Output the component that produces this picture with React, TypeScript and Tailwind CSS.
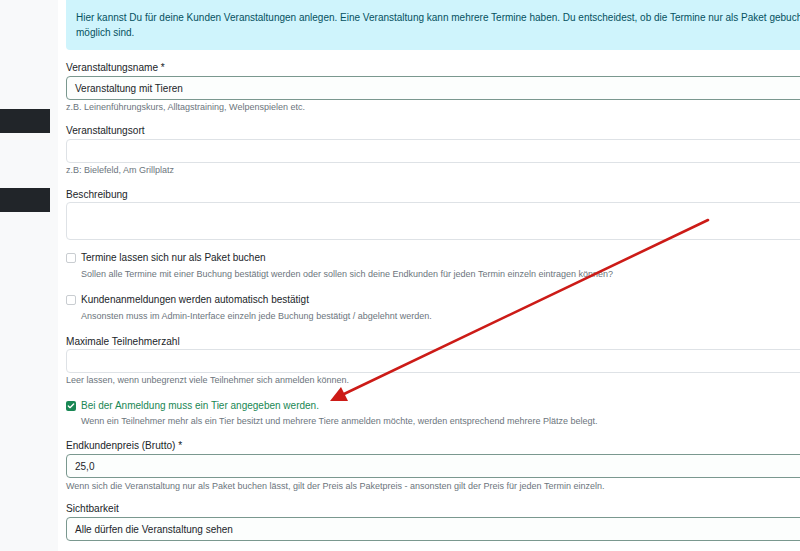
import { Check } from 'lucide-react'

const font = { fontFamily: '"Liberation Sans", Arial, sans-serif' }

function Label({ children }: { children: React.ReactNode }) {
  return <div className="text-[10.1px] leading-[15px] text-[#212529]">{children}</div>
}

function Help({ children, indent = false }: { children: React.ReactNode; indent?: boolean }) {
  return (
    <div className={`text-[9px] leading-[13px] text-[#6c757d] ${indent ? 'pl-[15px]' : ''}`}>
      {children}
    </div>
  )
}

function Input({ value, filled = false }: { value?: string; filled?: boolean }) {
  return (
    <div
      className={`h-[24px] rounded-[4px] border px-[8px] flex items-center text-[10px] text-[#212529] ${
        filled ? 'border-[#7a988f] bg-[#fcfefd]' : 'border-[#dee2e6] bg-white'
      }`}
    >
      {value}
    </div>
  )
}

function CheckRow({ label, checked = false }: { label: string; checked?: boolean }) {
  return (
    <div className="flex items-center gap-[5px] h-[15px]">
      {checked ? (
        <span className="w-[10px] h-[10px] rounded-[2px] bg-[#198754] flex items-center justify-center">
          <Check size={8} strokeWidth={4} className="text-white" />
        </span>
      ) : (
        <span className="w-[10px] h-[10px] rounded-[2px] border border-[#c9cdd1] bg-white" />
      )}
      <span className={`text-[10px] leading-[15px] ${checked ? 'text-[#198754]' : 'text-[#212529]'}`}>
        {label}
      </span>
    </div>
  )
}

export default function App() {
  return (
    <div className="relative w-[800px] h-[551px] overflow-hidden flex bg-white" style={font}>
      <aside className="w-[58px] shrink-0 bg-[#f8f9fa] flex flex-col">
        <div className="mt-[109px] h-[24px] w-[50px] bg-[#212529]" />
        <div className="mt-[55px] h-[24px] w-[50px] bg-[#212529]" />
      </aside>

      <main className="pl-[8px] w-[1000px] shrink-0">
        <div className="h-[50px] rounded-b-[4px] bg-[#cff4fc] px-[10px] py-[10px] text-[10px] leading-[15px] text-[#055160]">
          Hier kannst Du für deine Kunden Veranstaltungen anlegen. Eine Veranstaltung kann mehrere Termine haben. Du entscheidest, ob die Termine nur als Paket gebucht werden können oder auch einzeln
          <br />
          möglich sind.
        </div>

        <div className="mt-[10px]">
          <Label>Veranstaltungsname *</Label>
          <div className="mt-[1px]">
            <Input value="Veranstaltung mit Tieren" filled />
          </div>
          <div className="mt-[1px]">
            <Help>z.B. Leinenführungskurs, Alltagstraining, Welpenspielen etc.</Help>
          </div>
        </div>

        <div className="mt-[9px]">
          <Label>Veranstaltungsort</Label>
          <div className="mt-[1px]">
            <Input />
          </div>
          <div className="mt-[1px]">
            <Help>z.B: Bielefeld, Am Grillplatz</Help>
          </div>
        </div>

        <div className="mt-[10px]">
          <Label>Beschreibung</Label>
          <div className="h-[38px] rounded-[4px] border border-[#dee2e6] bg-white" />
        </div>

        <div className="mt-[10px]">
          <CheckRow label="Termine lassen sich nur als Paket buchen" />
          <div className="mt-[3px]">
            <Help indent>
              Sollen alle Termine mit einer Buchung bestätigt werden oder sollen sich deine Endkunden für jeden Termin einzeln eintragen können?
            </Help>
          </div>
        </div>

        <div className="mt-[11px]">
          <CheckRow label="Kundenanmeldungen werden automatisch bestätigt" />
          <div className="mt-[3px]">
            <Help indent>Ansonsten muss im Admin-Interface einzeln jede Buchung bestätigt / abgelehnt werden.</Help>
          </div>
        </div>

        <div className="mt-[11px]">
          <Label>Maximale Teilnehmerzahl</Label>
          <div>
            <Input />
          </div>
          <div className="mt-[1px]">
            <Help>Leer lassen, wenn unbegrenzt viele Teilnehmer sich anmelden können.</Help>
          </div>
        </div>

        <div className="mt-[11px]">
          <CheckRow label="Bei der Anmeldung muss ein Tier angegeben werden." checked />
          <div className="mt-[2px]">
            <Help indent>
              Wenn ein Teilnehmer mehr als ein Tier besitzt und mehrere Tiere anmelden möchte, werden entsprechend mehrere Plätze belegt.
            </Help>
          </div>
        </div>

        <div className="mt-[10px]">
          <Label>Endkundenpreis (Brutto) *</Label>
          <div className="mt-[1px]">
            <Input value="25,0" filled />
          </div>
          <div className="mt-[2px]">
            <Help>Wenn sich die Veranstaltung nur als Paket buchen lässt, gilt der Preis als Paketpreis - ansonsten gilt der Preis für jeden Termin einzeln.</Help>
          </div>
        </div>

        <div className="mt-[8px]">
          <Label>Sichtbarkeit</Label>
          <div className="mt-[1px]">
            <Input value="Alle dürfen die Veranstaltung sehen" filled />
          </div>
        </div>
      </main>

      <svg className="absolute inset-0 pointer-events-none" width="800" height="551" viewBox="0 0 800 551">
        <line x1="708" y1="220" x2="344" y2="394" stroke="#cc1b17" strokeWidth="2.6" strokeLinecap="round" />
        <polygon points="330,401 341,387 348,401" fill="#cc1b17" />
      </svg>
    </div>
  )
}
